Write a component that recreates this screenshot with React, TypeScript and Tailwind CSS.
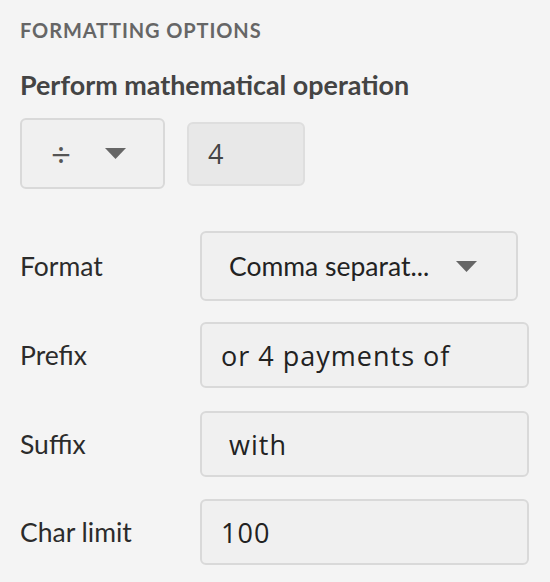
import React from "react";

const labelFont = { fontFamily: "Lato, 'Noto Sans', sans-serif" };
const controlFont = { fontFamily: "'Open Sans', 'Noto Sans', sans-serif" };

function Caret({ className = "" }: { className?: string }) {
  return (
    <svg width="21" height="11" viewBox="0 0 21 11" className={className}>
      <path d="M0 0 H21 L10.5 11 Z" fill="#666666" />
    </svg>
  );
}

function FieldRow({ label, children }: { label: string; children: React.ReactNode }) {
  return (
    <div className="flex items-center">
      <div className="w-[180px] shrink-0 text-[26.5px] leading-none text-[#2b2b2b]">{label}</div>
      {children}
    </div>
  );
}

function TextBox({ value }: { value: string }) {
  return (
    <div
      style={controlFont}
      className="flex h-[66px] w-[329px] items-center rounded-[6px] border-2 border-[#d9d9d9] bg-[#f0f0f0] pl-[19px] text-[27px] leading-none tracking-[1px] text-[#222] whitespace-pre"
    >
      {value}
    </div>
  );
}

export default function App() {
  return (
    <div style={labelFont} className="min-h-[582px] w-[550px] bg-[#f4f4f4] px-5 pt-[18px]">
      <div className="text-[20px] font-bold leading-6 tracking-[0.9px] text-[#666]">FORMATTING OPTIONS</div>
      <div className="mt-[27px] text-[26.9px] font-bold leading-8 text-[#444]">Perform mathematical operation</div>

      <div className="mt-[17px] flex items-center gap-[22px]" style={controlFont}>
        <div className="flex h-[71px] w-[145px] items-center rounded-[6px] border-2 border-[#d9d9d9] bg-[#f0f0f0] pl-[29px]">
          <span className="text-[35px] leading-none text-[#555]">÷</span>
          <Caret className="ml-[34px]" />
        </div>
        <div className="flex h-[64px] w-[118px] items-center rounded-[6px] border-2 border-[#dedede] bg-[#e8e8e8] pl-[19px] text-[27px] leading-none text-[#444]">
          4
        </div>
      </div>

      <div className="mt-[42px] flex flex-col">
        <FieldRow label="Format">
          <div className="flex h-[70px] w-[318px] items-center justify-between rounded-[6px] border-2 border-[#d9d9d9] bg-[#f0f0f0] pl-[27px] pr-[39px] text-[26.5px] leading-none text-[#222]">
            <span>Comma separat...</span>
            <Caret />
          </div>
        </FieldRow>
        <div className="mt-[21px]">
          <FieldRow label="Prefix">
            <TextBox value="or 4 payments of" />
          </FieldRow>
        </div>
        <div className="mt-[23px]">
          <FieldRow label="Suffix">
            <TextBox value=" with" />
          </FieldRow>
        </div>
        <div className="mt-[22px]">
          <FieldRow label="Char limit">
            <TextBox value="100" />
          </FieldRow>
        </div>
      </div>
    </div>
  );
}
